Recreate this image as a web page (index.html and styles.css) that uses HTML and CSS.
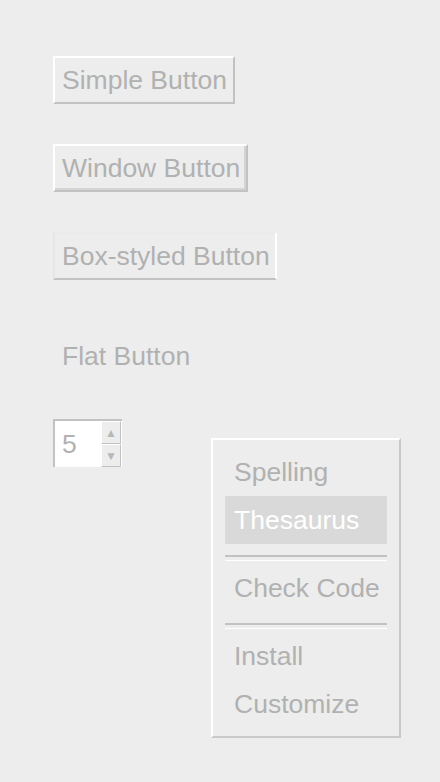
FILE: index.html
```html
<!DOCTYPE html>
<html lang="en">
<head>
  <meta charset="UTF-8" />
  <meta name="viewport" content="width=device-width, initial-scale=1.0" />
  <title>Widgets</title>
  <link rel="stylesheet" href="styles.css">
</head>
<body>

  <div class="panel">
    <button class="btn simple" disabled>Simple Button</button>
    <button class="btn window" disabled>Window Button</button>
    <button class="btn boxed" disabled>Box-styled Button</button>
    <button class="btn flat" disabled>Flat Button</button>

    <div class="spin">
      <span class="spin-value">5</span>
      <div class="spin-arrows">
        <span class="arrow">&#9650;</span>
        <span class="arrow">&#9660;</span>
      </div>
    </div>
  </div>

  <div class="popup-menu">
    <ul>
      <li>Spelling</li>
      <li class="active">Thesaurus</li>
      <li class="sep"></li>
      <li>Check Code</li>
      <li class="sep"></li>
      <li>Install</li>
      <li>Customize</li>
    </ul>
  </div>

</body>
</html>
```

FILE: styles.css
```css
* {
  box-sizing: border-box;
}

body {
  font-family: "Liberation Sans", Arial, sans-serif;
  margin: 0;
  padding: 56px 0 0 53px;
  background: #ededed;
  color: #b1b1b1;
  height: 100vh;
  position: relative;
}

.panel {
  display: flex;
  flex-direction: column;
  align-items: flex-start;
}

.btn {
  font-family: inherit;
  font-size: 26.5px;
  color: #b1b1b1;
  background: #ededed;
  height: 48px;
  padding: 0 7px;
  margin: 0 0 40px 0;
  display: flex;
  align-items: center;
  justify-content: flex-start;
  white-space: nowrap;
  border: 2px solid;
  border-color: #ffffff #c2c2c2 #c2c2c2 #ffffff;
}

.simple {
  width: 182px;
}

.window {
  width: 195px;
  box-shadow: inset -2px -2px 0 #d4d4d4;
}

.boxed {
  width: 224px;
  border-color: #ebebeb #ffffff #c2c2c2 #e6e6e6;
}

.flat {
  border-color: transparent;
  margin-top: 12px;
  margin-bottom: 39px;
}

.spin {
  display: flex;
  height: 48px;
  width: 69px;
}

.spin-value {
  width: 46px;
  background: #ffffff;
  border-left: 2px solid #c2c2c2;
  border-top: 2px solid #c2c2c2;
  font-size: 26.5px;
  padding-left: 7px;
  display: flex;
  align-items: center;
}

.spin-arrows {
  width: 23px;
  display: flex;
  flex-direction: column;
  background: #ffffff;
  border-top: 2px solid #c2c2c2;
}

.arrow {
  flex: 1;
  font-size: 12px;
  color: #b8b8b8;
  display: flex;
  align-items: center;
  justify-content: center;
  background: #ededed;
  border: 1px solid;
  border-color: #ffffff #c2c2c2 #c2c2c2 #ffffff;
  margin: 0 1px 0 2px;
}

.popup-menu {
  position: absolute;
  top: 438px;
  left: 211px;
  width: 190px;
  background: #ededed;
  border: 2px solid;
  border-color: #ffffff #c9c9c9 #c9c9c9 #ffffff;
  padding: 8px 12px;
}

.popup-menu ul {
  list-style: none;
  margin: 0;
  padding: 0;
}

.popup-menu ul li {
  height: 48px;
  font-size: 26.5px;
  padding-left: 9px;
  display: flex;
  align-items: center;
  white-space: nowrap;
}

.popup-menu ul li.active {
  background: #d9d9d9;
  color: #ffffff;
}

.popup-menu ul li.sep {
  height: 20px;
  position: relative;
}

.popup-menu ul li.sep::after {
  content: "";
  position: absolute;
  left: 0;
  right: 0;
  top: 11px;
  height: 3px;
  border-top: 2px solid #c2c2c2;
  border-bottom: 1px solid #ffffff;
}
```
